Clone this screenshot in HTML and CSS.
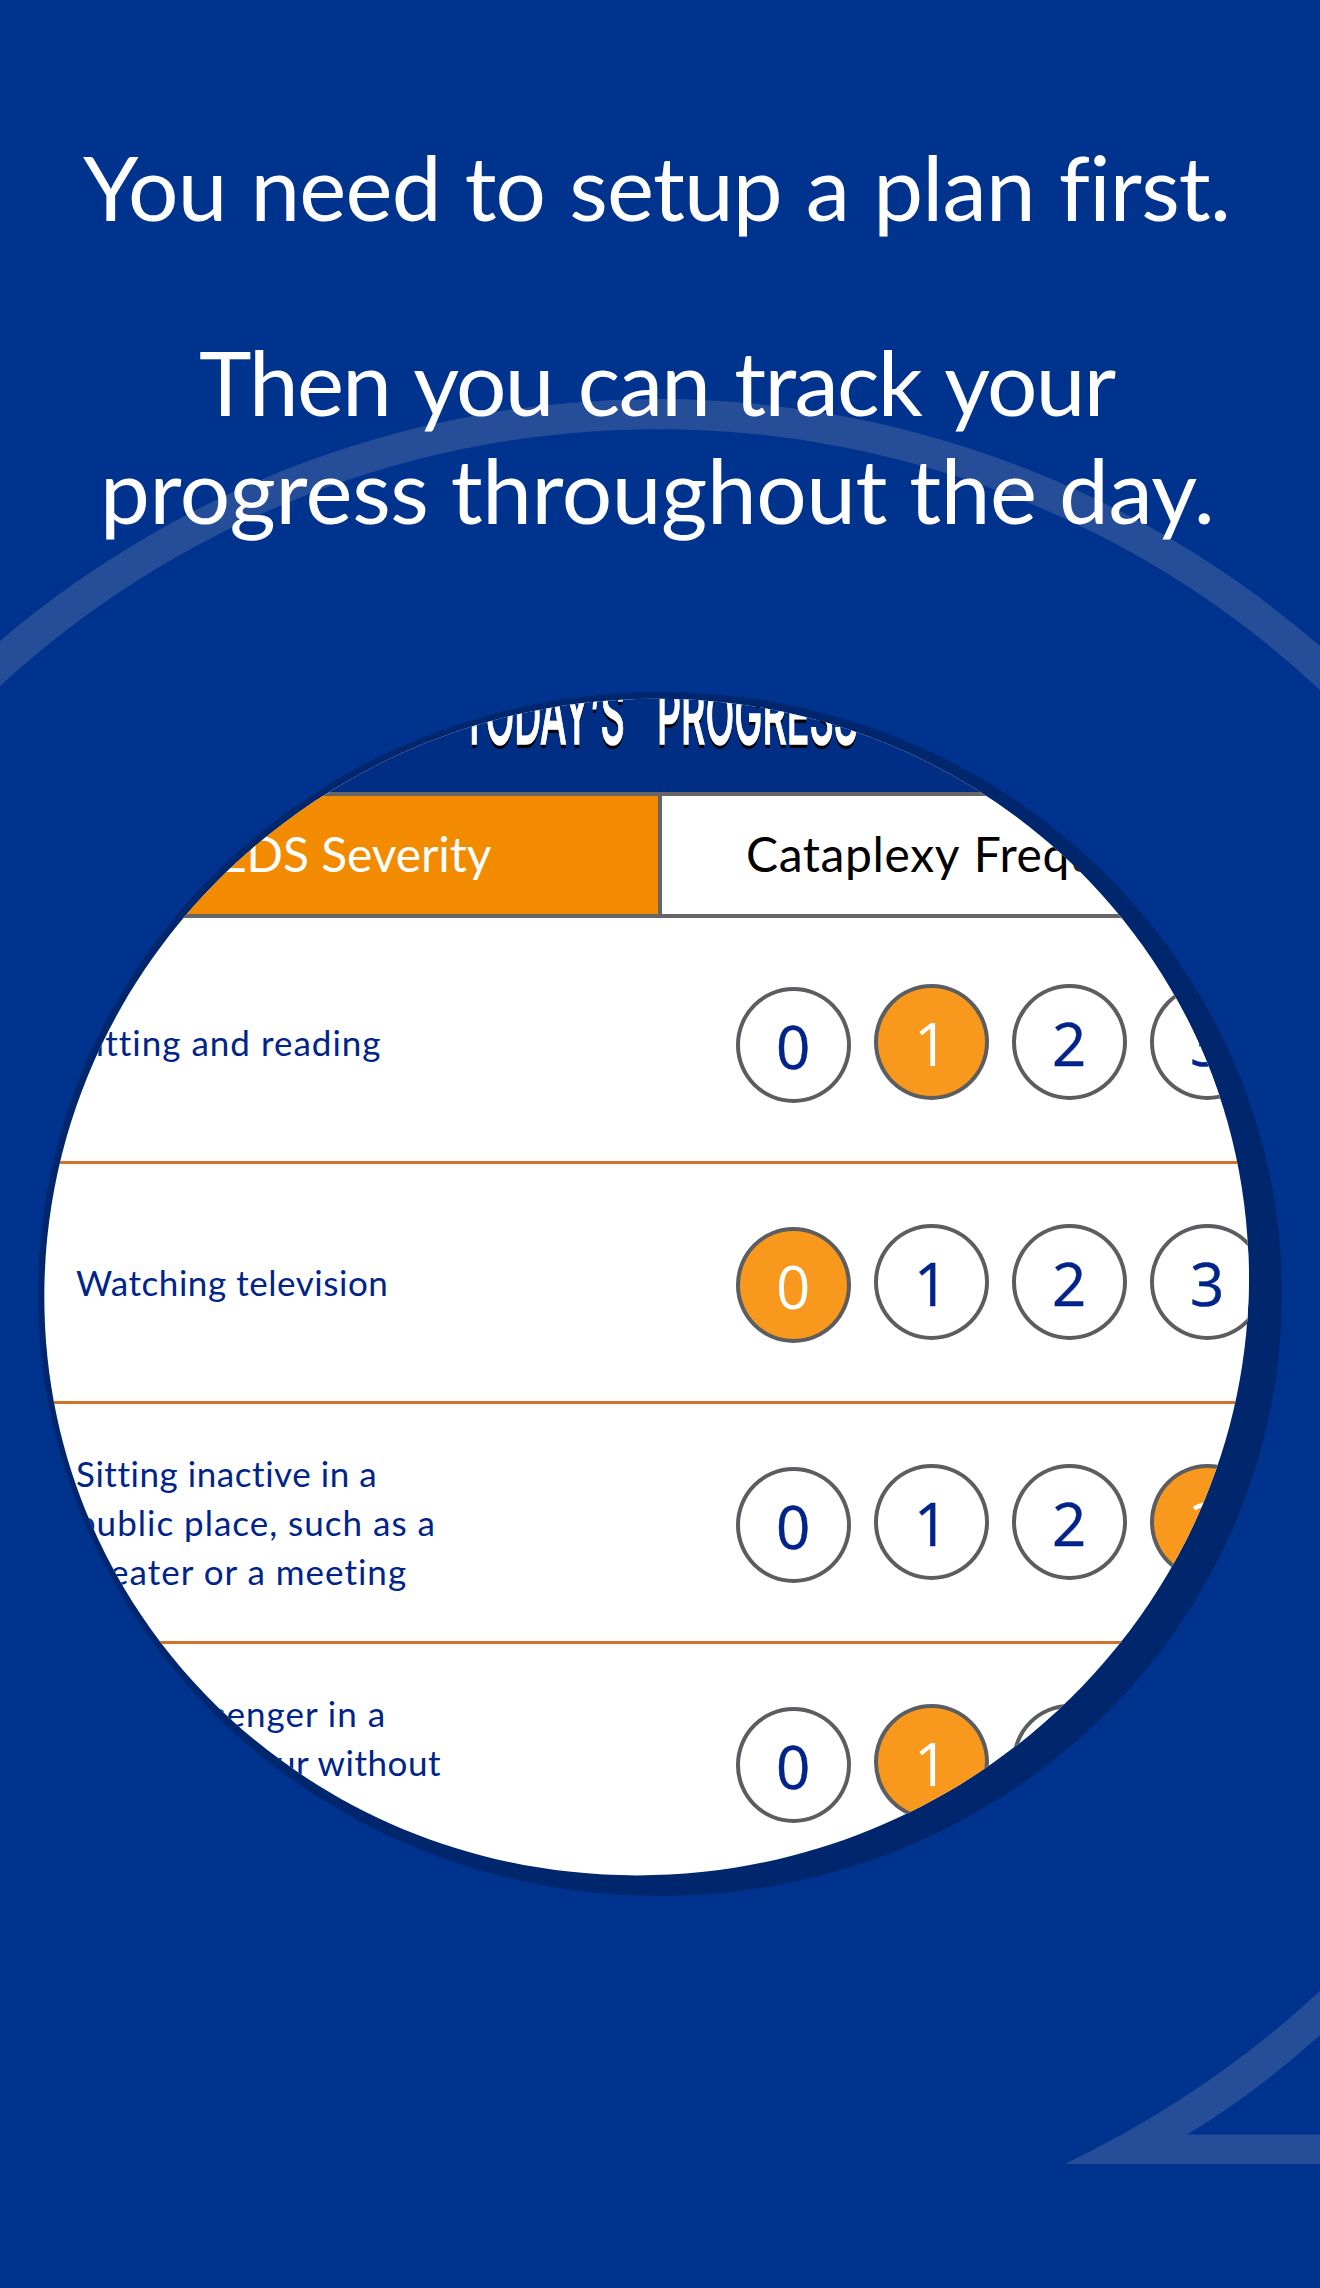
FILE: index.html
```html
<!DOCTYPE html>
<html lang="en">
<head>
<meta charset="utf-8">
<title>Today's Progress</title>
<link rel="stylesheet" href="styles.css">
</head>
<body>
<main class="screen">
  <svg class="backdrop" viewBox="0 0 1320 2288" aria-hidden="true">
    <path class="ring" d="M0 641A1013 1013 0 0 1 1320 646V690A971 971 0 0 0 0 686Z"/>
    <path class="ring" d="M1320 1991Q1207 2096 1065 2164H1320V2134.5H1187Q1256 2093 1320 2035Z"/>
    <ellipse class="shade" cx="660" cy="1294" rx="622" ry="602"/>
  </svg>
  <header class="intro">
    <p class="line first"><span>You need to setup a plan first.</span></p>
    <p class="line second"><span>Then you can track your</span></p>
    <p class="line third"><span>progress throughout the day.</span></p>
  </header>
  <section class="lens">
    <h1 class="heading"><span class="word today">TODAY’S</span><span class="word progress">PROGRESS</span></h1>
    <nav class="tabs">
      <div class="tab active"><span>EDS Severity</span></div>
      <div class="tab"><span>Cataplexy Frequency</span></div>
    </nav>
    <div class="rows">
      <div class="row"><p class="label">Sitting and reading</p>
        <div class="scale"><b class="dot zero">0</b><b class="dot on">1</b><b class="dot">2</b><b class="dot">3</b></div></div>
      <div class="row"><p class="label tight">Watching television</p>
        <div class="scale"><b class="dot zero on">0</b><b class="dot">1</b><b class="dot">2</b><b class="dot">3</b></div></div>
      <div class="row"><p class="label"><span class="tight">Sitting inactive in a</span><br>public place, such as a<br>theater or a meeting</p>
        <div class="scale"><b class="dot zero">0</b><b class="dot">1</b><b class="dot">2</b><b class="dot on">3</b></div></div>
      <div class="row"><p class="label">As a passenger in a<br><span class="tight">car for an hour without</span><br>a break</p>
        <div class="scale"><b class="dot zero">0</b><b class="dot on">1</b><b class="dot">2</b><b class="dot">3</b></div></div>
    </div>
  </section>
</main>
</body>
</html>
```
FILE: styles.css
```css
* { box-sizing: border-box; }
body { margin: 0; background: #00338d; font-family: Lato, sans-serif; }
p, h1 { margin: 0; font-weight: 400; }

.screen { position: relative; width: 1320px; height: 2288px; overflow: hidden; }
.backdrop { position: absolute; inset: 0; width: 1320px; height: 2288px; }
.ring { fill: #264e98; }
.shade { fill: #00276d; }

.intro {
  position: relative;
  height: 692px;
  padding-top: 133px;
  color: #fff;
  font-size: 89px;
  line-height: 108px;
  white-space: nowrap;
}
.line { padding-left: 83px; }
.first { margin-bottom: 87px; letter-spacing: -0.8px; word-spacing: 2px; }
.second { padding-left: 199px; letter-spacing: -1.7px; word-spacing: 4px; }
.third { padding-left: 100px; letter-spacing: -0.4px; }

.lens {
  position: relative;
  height: 1200px;
  overflow: hidden;
  background: #fff;
  clip-path: path("M656.3 6.7C988.9 6.7 1254.2 270 1248.8 595C1243.4 920 969.5 1183.4 636.9 1183.4C304.3 1183.4 39 920 44.4 595C49.8 270 323.7 6.7 656.3 6.7Z");
}
.heading {
  display: flex;
  height: 100px;
  padding-left: 462px;
  background: #002e85;
  color: #fff;
  font: 500 80px/46px Inter, sans-serif;
  text-shadow: 0 4px 0 #000;
  -webkit-text-stroke: 1.5px #fff;
}
.word { transform-origin: 0 50%; white-space: nowrap; }
.today { width: 195px; transform: scaleX(.47); }
.progress { width: 200px; transform: scaleX(.47); }

.tabs {
  display: grid;
  grid-template-columns: 662px 658px;
  height: 126px;
  border: solid #666;
  border-width: 4px 0;
  font-size: 48px;
  line-height: 116px;
  white-space: nowrap;
}
.tab { padding-left: 84px; color: #000; letter-spacing: 0.6px; word-spacing: 2px; }
.tab.active { padding-left: 219px; border-right: 4px solid #666; background: #f28b00; color: #fff; letter-spacing: -0.1px; word-spacing: 0; }

.rows { padding-top: 6px; }
.row {
  display: grid;
  grid-template-columns: 660px 1fr;
  align-items: center;
  height: 240px;
  border-bottom: 3px solid #d4702a;
}
.row:last-child { border-color: transparent; }
.label { padding-left: 76px; color: #00248a; font-size: 35px; line-height: 49px; letter-spacing: 1px; white-space: nowrap; }
.tight { letter-spacing: 0.55px; }
.scale { display: flex; gap: 22.5px; padding: 0 0 2px 75.5px; }
.dot {
  flex: none;
  width: 115.5px;
  height: 116px;
  border: 4px solid #5c5d60;
  border-radius: 50%;
  background: #fff;
  color: #00248a;
  font: 400 60px/110px "Open Sans", sans-serif;
  text-align: center;
  -webkit-text-stroke: 0.5px;
}
.dot.zero { margin: 3px 0 -3px; }
.dot.on { background: #f8981d; color: #fff; -webkit-text-stroke: 0; }
```
